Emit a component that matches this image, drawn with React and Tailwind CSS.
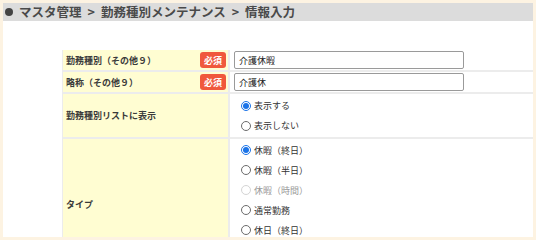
import React from 'react'

const Radio = ({ checked, disabled, label }) => (
  <div className='flex items-center h-[20px] gap-[3px]'>
    <span
      className={`w-[10px] h-[10px] rounded-full border flex items-center justify-center bg-white ${
        checked ? 'border-[#1a73e8]' : disabled ? 'border-[#d4d4d4]' : 'border-[#6b6b6b]'
      }`}
    >
      {checked && <span className='w-[6px] h-[6px] rounded-full bg-[#1a73e8]' />}
    </span>
    <span className={disabled ? 'text-[#9a9a9a]' : 'text-[#333]'}>{label}</span>
  </div>
)

const Required = () => (
  <span className='w-[26px] h-[16px] rounded-[3px] bg-[#f0583c] text-white font-bold text-[9px] flex items-center justify-center'>必須</span>
)

const App = () => {
  return (
    <div className='w-[536px] h-[240px] overflow-hidden bg-white border-[3px] border-[#fdf3e2] font-["Noto_Sans_CJK_JP","Noto_Sans",sans-serif]'>
      <div className='h-[18px] bg-[#dcdcdc] flex items-center pl-[2px] text-[12.5px] font-bold text-[#4a4a4a] leading-none'>
        <span className='w-[8px] h-[8px] rounded-full bg-[#444] mr-[6px]' />
        <span>マスタ管理</span>
        <span className='mx-[6px]'>&gt;</span>
        <span>勤務種別メンテナンス</span>
        <span className='mx-[6px]'>&gt;</span>
        <span>情報入力</span>
      </div>

      <div className='ml-[59px] mt-[29px] grid grid-cols-[165px_1fr] gap-[2px] bg-[#ececec] pl-[1px] text-[9px] leading-none'>
        {/* row 1 */}
        <div className='bg-[#fffdd2] h-[20px] flex items-center justify-between pl-[3px] pr-[2px] font-bold text-[#3a3a3a]'>
          <span>勤務種別（その他９）</span>
          <Required />
        </div>
        <div className='bg-white h-[20px] flex items-center pl-[4px]'>
          <div className='w-[230px] h-[18px] border border-[#9a9a9a] rounded-[2px] flex items-center pl-[4px] text-[#222]'>介護休暇</div>
        </div>

        {/* row 2 */}
        <div className='bg-[#fffdd2] h-[20px] flex items-center justify-between pl-[3px] pr-[2px] font-bold text-[#3a3a3a]'>
          <span>略称（その他９）</span>
          <Required />
        </div>
        <div className='bg-white h-[20px] flex items-center pl-[4px]'>
          <div className='w-[230px] h-[18px] border border-[#9a9a9a] rounded-[2px] flex items-center pl-[4px] text-[#222]'>介護休</div>
        </div>

        {/* row 3 */}
        <div className='bg-[#fffdd2] h-[43px] flex items-center pl-[3px] font-bold text-[#3a3a3a]'>
          <span>勤務種別リストに表示</span>
        </div>
        <div className='bg-white h-[43px] flex flex-col justify-center pl-[11px]'>
          <Radio checked label='表示する' />
          <Radio label='表示しない' />
        </div>

        {/* row 4 */}
        <div className='bg-[#fffdd2] h-[130px] flex items-center pl-[3px] font-bold text-[#3a3a3a]'>
          <span>タイプ</span>
        </div>
        <div className='bg-white h-[130px] flex flex-col pt-[1px] pl-[11px]'>
          <Radio checked label='休暇（終日）' />
          <Radio label='休暇（半日）' />
          <Radio disabled label='休暇（時間）' />
          <Radio label='通常勤務' />
          <Radio label='休日（終日）' />
        </div>
      </div>
    </div>
  )
}

export default App
